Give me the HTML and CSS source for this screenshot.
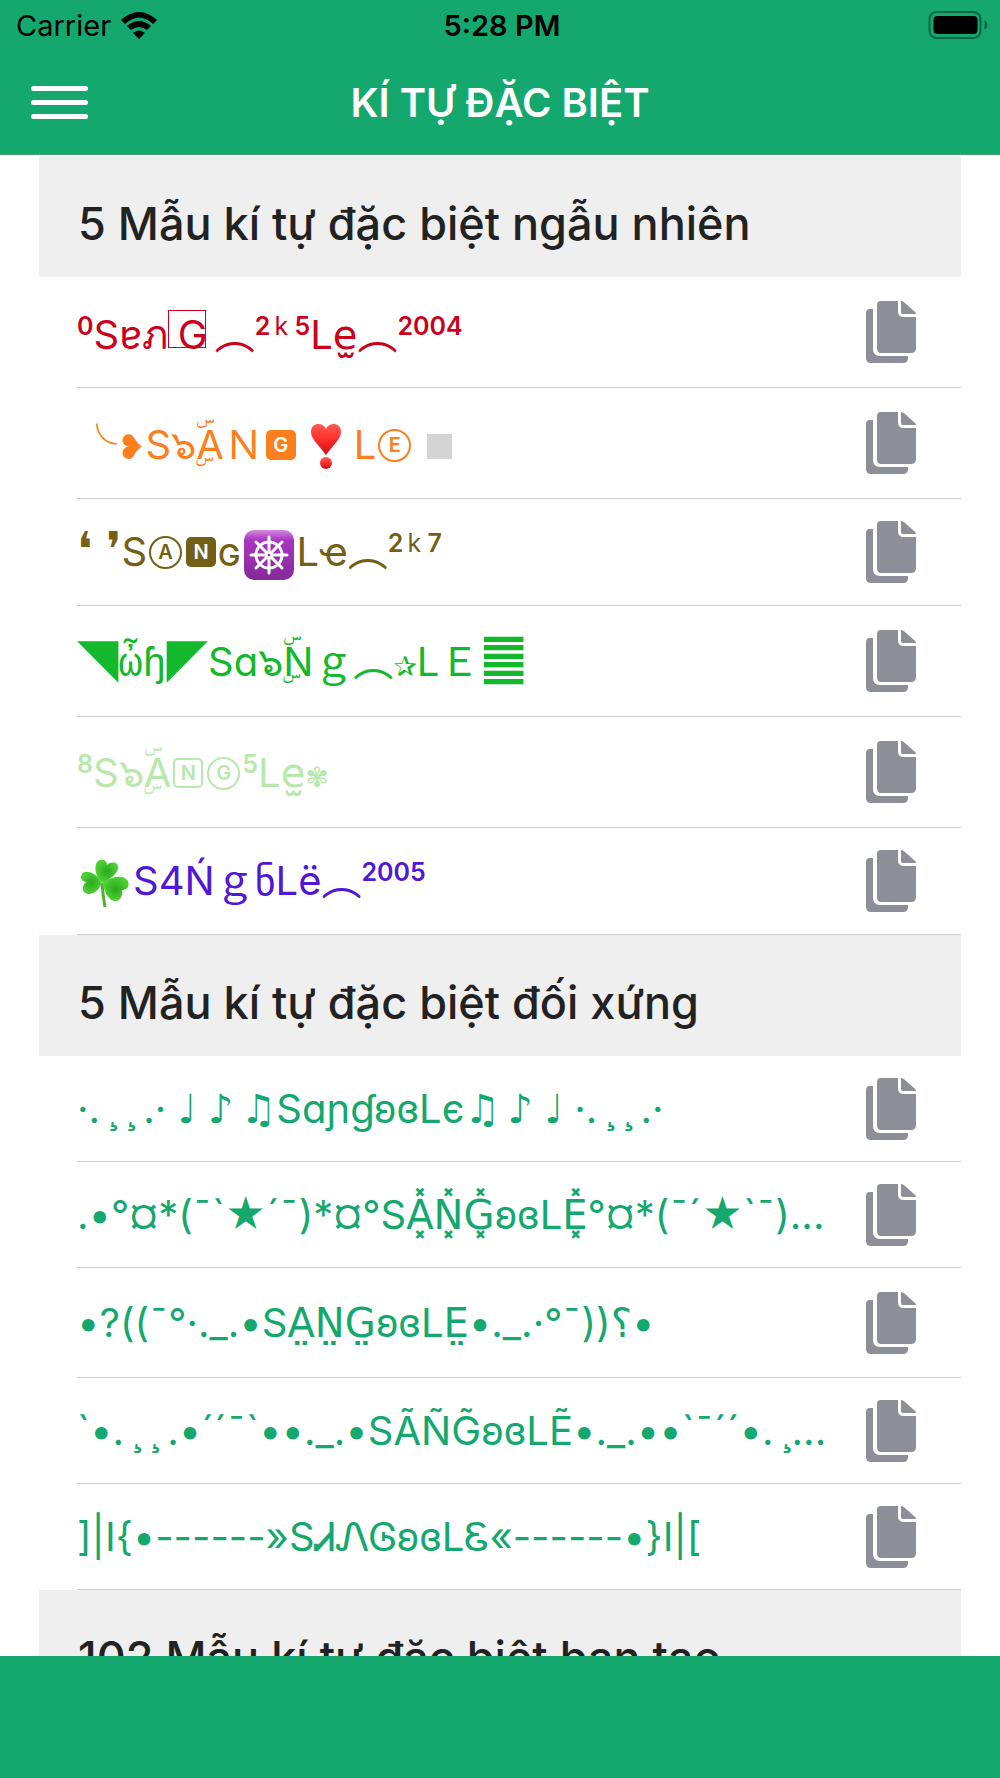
FILE: index.html
```html
<!DOCTYPE html>
<html lang="vi">
<head>
    <meta charset="UTF-8">
    <meta name="viewport" content="width=device-width, initial-scale=1.0">
    <title>Kí tự đặc biệt</title>
    <link rel="stylesheet" href="styles.css">
</head>
<body>
    <!-- copy icon and emoji shared by the rows -->
    <svg class="defs" aria-hidden="true">
        <symbol id="copy" viewBox="0 0 50 62">
            <path d="M4 8h3v40q0 7 7 7h28v2q0 5-5 5H5q-5 0-5-5V12q0-4 4-4z"/>
            <path d="M15 0h17v10q0 6 6 6h12v31q0 5-5 5H15q-4 0-4-5V4q0-4 4-4z"/>
            <path d="M35 0q2 0 4 2l9 8q2 1 2 3H37q-2 0-2-2z"/>
        </symbol>
        <linearGradient id="red" x1="0" y1="0" x2="0" y2="1">
            <stop offset="0" stop-color="#ff5a50"/>
            <stop offset="0.5" stop-color="#fd2e2c"/>
            <stop offset="1" stop-color="#c80f14"/>
        </linearGradient>
        <linearGradient id="purple" x1="0" y1="0" x2="0" y2="1">
            <stop offset="0" stop-color="#d58ae0"/>
            <stop offset="0.2" stop-color="#a935c2"/>
            <stop offset="1" stop-color="#842a98"/>
        </linearGradient>
        <radialGradient id="leaf">
            <stop offset="0" stop-color="#2aa81c"/>
            <stop offset="1" stop-color="#4fd136"/>
        </radialGradient>
    </svg>

    <header>
        <div class="status">
            <div class="carrier">Carrier
                <svg class="wifi" viewBox="0 0 36 27" aria-hidden="true">
                    <path d="M0 8Q18-8 36 8L32 12Q18-1 4 12z"/>
                    <path d="M6 14Q18 4 30 14L26 18Q18 12 10 18z"/>
                    <path d="M12 21Q18 16 24 21L18 27z"/>
                </svg>
            </div>
            <div class="time">5:28 PM</div>
            <svg class="battery" viewBox="0 0 59 28" aria-hidden="true">
                <rect x="1" y="1" width="51" height="26" rx="7" fill="none" stroke="#0b6845" stroke-width="2"/>
                <rect x="5" y="5" width="44" height="18" rx="4"/>
                <path d="M56 9q3 2 3 5t-3 5z" fill="#0b6845"/>
            </svg>
        </div>
        <div class="navbar">
            <button class="menu" aria-label="Menu"><span></span><span></span><span></span></button>
            <h1>KÍ TỰ ĐẶC BIỆT</h1>
        </div>
    </header>

    <main>
        <section class="random">
            <h2>5 Mẫu kí tự đặc biệt ngẫu nhiên</h2>
            <ul>
                <li class="tall red">
                    <span class="name"><sup>0</sup>Sɐภ<span class="boxed">G</span>&thinsp;︵<sup>2&thinsp;<span class="thin">k</span>&nbsp;5</sup>Le̫︵<sup>2004</sup></span>
                    <button class="copy" aria-label="Sao chép"><svg><use href="#copy"/></svg></button>
                </li>
                <li class="tall orange">
                    <span class="name"><span class="cjk">╰</span><span class="small">❥</span>S๖<span class="marked">A<span class="mark">&nbsp;ۣۜ</span></span>Ｎ<span class="key solid">G</span><svg class="emoji" viewBox="0 0 50 50" aria-hidden="true"><path d="M25 32C18 22 10 16 10 9C10-1 22-1 25 6C28-1 40-1 40 9C40 16 32 22 25 32z" fill="url(#red)"/><circle cx="25" cy="40" r="6" fill="url(#red)"/></svg>L<span class="key round">E</span><span class="square"></span></span>
                    <button class="copy" aria-label="Sao chép"><svg><use href="#copy"/></svg></button>
                </li>
                <li class="olive">
                    <span class="name"><span class="quotes">❛&nbsp;❜</span>S<span class="key round">A</span><span class="key solid">N</span>ɢ<svg class="emoji" viewBox="0 0 50 50" aria-hidden="true"><rect width="50" height="50" rx="10" fill="url(#purple)"/><g fill="none" stroke="#fff" stroke-width="3" stroke-linecap="round"><circle cx="25" cy="25" r="13"/><circle cx="25" cy="25" r="3"/><path d="M25 7v15M25 28v15M7 25h15M28 25h15M12 12l11 11M27 27l11 11M38 12L27 23M23 27L12 38"/></g></svg>Lҽ︵<sup>2&thinsp;<span class="thin">k</span>&nbsp;7</sup></span>
                    <button class="copy" aria-label="Sao chép"><svg><use href="#copy"/></svg></button>
                </li>
                <li class="tall green">
                    <span class="name"><span class="big">◥</span><span class="mono">ὦɧ</span><span class="big">◤</span>Sɑ๖<span class="marked">N<span class="mark">&nbsp;ۣۜ</span></span>ｇ︵<span class="tiny">✰</span>LＥ<span class="big">䷀</span></span>
                    <button class="copy" aria-label="Sao chép"><svg><use href="#copy"/></svg></button>
                </li>
                <li class="tall pale">
                    <span class="name"><sup>8</sup>S๖<span class="marked">A<span class="mark">&nbsp;ۣۜ</span></span><span class="key">N</span><span class="key round">G</span><sup>5</sup>Le̫<span class="tiny">✾</span></span>
                    <button class="copy" aria-label="Sao chép"><svg><use href="#copy"/></svg></button>
                </li>
                <li class="violet">
                    <span class="name"><svg class="emoji" viewBox="0 0 50 50" aria-hidden="true"><path d="M22 24q1 13 3 24" fill="none" stroke="#4cb52b" stroke-width="3"/><g fill="url(#leaf)"><path d="M23 24C14 18 13 3 20 1C26 0 27 4 27 6C31 2 39 3 38 9C37 16 29 20 23 24z"/><path d="M22 24C17 14 6 10 2 15C-1 20 3 23 6 23C1 27 2 35 9 35C15 35 20 29 22 24z"/><path d="M23 24C30 17 44 15 48 22C50 29 46 31 42 31C43 37 40 43 34 42C27 40 24 31 23 24z"/></g></svg>S4ŃｇნLë︵<sup>2005</sup></span>
                    <button class="copy" aria-label="Sao chép"><svg><use href="#copy"/></svg></button>
                </li>
            </ul>
        </section>

        <section class="symmetric">
            <h2>5 Mẫu kí tự đặc biệt đối xứng</h2>
            <ul>
                <li>
                    <span class="name">·.&thinsp;¸&thinsp;¸&thinsp;.· ♩ ♪&thinsp;♫SɑɲɠʚɞLє♫&thinsp;♪ ♩ ·.&thinsp;¸&thinsp;¸&thinsp;.·</span>
                    <button class="copy" aria-label="Sao chép"><svg><use href="#copy"/></svg></button>
                </li>
                <li>
                    <span class="name">.•°¤*(¯`★´¯)*¤°SA͓̽N͓̽G͓̽ʚɞLE͓̽°¤*(¯´★`¯)...</span>
                    <button class="copy" aria-label="Sao chép"><svg><use href="#copy"/></svg></button>
                </li>
                <li class="tall">
                    <span class="name">•?((¯°·._.•SA̤̤N̤̤G̤̤ʚɞLE̤̤•._.·°¯))؟•</span>
                    <button class="copy" aria-label="Sao chép"><svg><use href="#copy"/></svg></button>
                </li>
                <li>
                    <span class="name">`•.&thinsp;¸&thinsp;¸&thinsp;.•´´¯`••._.•SÃÑG̃ʚɞLẼ•._.••`¯´´•.&thinsp;¸...</span>
                    <button class="copy" aria-label="Sao chép"><svg><use href="#copy"/></svg></button>
                </li>
                <li>
                    <span class="name">]|I{•------»SᏗᏁᎶʚɞLᏋ«------•}I|[</span>
                    <button class="copy" aria-label="Sao chép"><svg><use href="#copy"/></svg></button>
                </li>
            </ul>
        </section>

        <section>
            <h2>102 Mẫu kí tự đặc biệt bạn tạo</h2>
        </section>
    </main>

    <footer></footer>
</body>
</html>
```
FILE: styles.css
```css
* {
    box-sizing: border-box;
}
body {
    margin: 0;
    height: 100vh;
    display: flex;
    flex-direction: column;
    font-family: Inter, "DejaVu Sans", "Noto Sans", "Noto Sans CJK JP", sans-serif;
    background-color: #fff;
    color: #222;
}
.defs {
    position: absolute;
    width: 0;
    height: 0;
}

/* Top bar */
header {
    flex: none;
    background-color: #14a86e;
    border-bottom: 1px solid #3f9c78;
}
.status {
    display: grid;
    grid-template-columns: 1fr auto 1fr;
    align-items: center;
    height: 50px;
    padding: 0 12px 0 16px;
    font-size: 29px;
    color: #000;
}
.carrier {
    display: flex;
    align-items: center;
    gap: 10px;
}
.wifi {
    width: 36px;
    height: 27px;
}
.time {
    font-weight: 600;
}
.battery {
    width: 60px;
    height: 28px;
    justify-self: end;
}
.navbar {
    display: grid;
    grid-template-columns: 1fr auto 1fr;
    align-items: center;
    height: 104px;
    padding: 0 31px;
}
.menu {
    display: flex;
    flex-direction: column;
    gap: 9px;
    width: 57px;
    padding: 0;
    border: none;
    background: none;
    cursor: pointer;
}
.menu span {
    width: 100%;
    height: 5px;
    border-radius: 3px;
    background-color: #fff;
}
h1 {
    margin: 0;
    font-size: 40px;
    font-weight: 600;
    color: #fff;
}

/* Lists */
main {
    flex: 1;
    min-height: 0;
    overflow: hidden;
    padding: 1px 39px 0;
}
h2 {
    display: flex;
    align-items: center;
    height: 121px;
    margin: 0;
    padding: 14px 39px 0;
    background-color: #efefef;
    font-size: 45px;
    font-weight: 500;
}
ul {
    margin: 0;
    padding: 0 0 0 38px;
    list-style: none;
}
li {
    display: flex;
    align-items: center;
    justify-content: space-between;
    height: 106px;
    padding-right: 45px;
    border-bottom: 1px solid #ccc;
    color: #14a86e;
}
.random li {
    height: 107px;
}
.random .tall {
    height: 111px;
}
.tall {
    height: 110px;
}
.name {
    font-size: 40px;
    line-height: 64px;
    font-feature-settings: "calt" 0;
    white-space: nowrap;
}
.random .tall .name {
    padding-top: 6px;
}
.copy {
    flex: none;
    padding: 0;
    border: none;
    background: none;
    cursor: pointer;
}
.copy svg {
    display: block;
    width: 50px;
    height: 62px;
    fill: #8c8f98;
}

/* Symbols inside the names */
sup {
    font-size: 25px;
    font-weight: 600;
    line-height: 1;
    vertical-align: 14px;
}
.thin {
    font-weight: 400;
}
.big {
    font-size: 54px;
    line-height: 1;
}
.small {
    font-size: 34px;
}
.tiny {
    font-size: 28px;
}
.quotes {
    font-size: 48px;
    line-height: 1;
}
.cjk {
    font-family: "Noto Sans CJK JP", sans-serif;
    line-height: 1;
}
.mono {
    font-family: "Liberation Mono", "DejaVu Sans Mono", monospace;
    line-height: 1;
}
.emoji {
    width: 50px;
    height: 50px;
    margin: 0 3px;
    vertical-align: middle;
}
.boxed {
    position: relative;
    padding-left: 10px;
}
.boxed::before {
    content: "";
    position: absolute;
    left: 0;
    top: 0;
    width: 36px;
    height: 36px;
    border: 1px solid;
}
/* letter with small marks over and under it */
.marked {
    position: relative;
}
.mark {
    position: absolute;
    left: 0;
    top: 0;
    line-height: 1;
}
/* letter in a square or a circle */
.key {
    display: inline-flex;
    align-items: center;
    justify-content: center;
    width: 30px;
    height: 30px;
    margin: 0 2px;
    border: 2px solid;
    border-radius: 5px;
    font-size: 20px;
    font-weight: 600;
    line-height: 1;
    vertical-align: 7px;
}
.round {
    width: 33px;
    height: 33px;
    border-radius: 50%;
}
.solid {
    color: #fff;
    border: none;
}
.orange .solid {
    background-color: #fb7f1e;
}
.olive .solid {
    background-color: #746014;
}
.square {
    display: inline-block;
    width: 25px;
    height: 25px;
    margin-left: 14px;
    background-color: #d4d4d4;
}

.red { color: #cc001c; }
.orange { color: #fb7f1e; }
.olive { color: #746014; }
.green { color: #14b82c; }
.pale { color: #b8e8ac; }
.violet { color: #4f18d4; }

footer {
    flex: none;
    height: 122px;
    background-color: #14a86e;
}
```
